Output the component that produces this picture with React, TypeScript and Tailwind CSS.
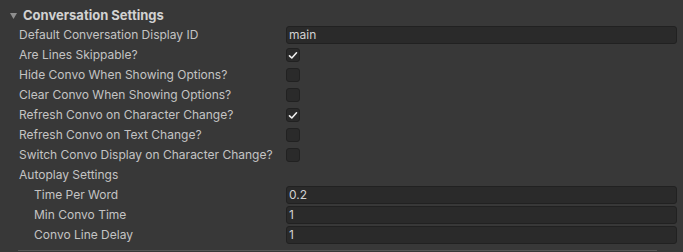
import React from 'react';

type Row =
  | { kind: 'text'; label: string; value: string; indent?: boolean }
  | { kind: 'check'; label: string; checked: boolean }
  | { kind: 'group'; label: string };

const rows: Row[] = [
  { kind: 'text', label: 'Default Conversation Display ID', value: 'main' },
  { kind: 'check', label: 'Are Lines Skippable?', checked: true },
  { kind: 'check', label: 'Hide Convo When Showing Options?', checked: false },
  { kind: 'check', label: 'Clear Convo When Showing Options?', checked: false },
  { kind: 'check', label: 'Refresh Convo on Character Change?', checked: true },
  { kind: 'check', label: 'Refresh Convo on Text Change?', checked: false },
  { kind: 'check', label: 'Switch Convo Display on Character Change?', checked: false },
  { kind: 'group', label: 'Autoplay Settings' },
  { kind: 'text', label: 'Time Per Word', value: '0.2', indent: true },
  { kind: 'text', label: 'Min Convo Time', value: '1', indent: true },
  { kind: 'text', label: 'Convo Line Delay', value: '1', indent: true },
];

const Checkbox = ({ checked }: { checked: boolean }) => (
  <div className="w-[14px] h-[14px] rounded-[3px] bg-[#2a2a2a] border border-[#212121] flex items-center justify-center">
    {checked && (
      <svg width="10" height="9" viewBox="0 0 10 9">
        <path d="M1.5 4.8 L3.8 7 L8.5 1.8" fill="none" stroke="#eeeeee" strokeWidth="1.6" strokeLinecap="round" strokeLinejoin="round" />
      </svg>
    )}
  </div>
);

const FieldRow = ({ row }: { row: Row }) => {
  const indent = row.kind === 'text' && row.indent;
  return (
    <div className="h-5 flex items-center">
      <div className={`w-[286px] shrink-0 ${indent ? 'pl-[34px]' : 'pl-[19px]'} text-[12px] text-[#c4c4c4] whitespace-nowrap`}>
        {row.label}
      </div>
      {row.kind === 'text' && (
        <div className="w-[391px] h-[18px] rounded-[3px] bg-[#2a2a2a] border border-[#212121] flex items-center pl-[2px] text-[12px] text-[#d2d2d2]">
          {row.value}
        </div>
      )}
      {row.kind === 'check' && <Checkbox checked={row.checked} />}
    </div>
  );
};

export default function App() {
  return (
    <div
      className="w-[683px] h-[252px] bg-[#383838] overflow-hidden pt-[6px]"
      style={{ fontFamily: 'Inter, "Noto Sans", sans-serif' }}
    >
      <div className="h-[19px] flex items-center pl-[10px]">
        <svg width="7" height="6" viewBox="0 0 7 6" className="mr-[6px]">
          <path d="M0 0 H7 L3.5 6 Z" fill="#8f8f8f" />
        </svg>
        <span className="text-[13px] font-bold text-[#d2d2d2]">Conversation Settings</span>
      </div>
      {rows.map((row, i) => (
        <FieldRow key={i} row={row} />
      ))}
      <div className="mt-[5px] ml-[18px] w-[639px] h-px bg-[#555555]" />
    </div>
  );
}
